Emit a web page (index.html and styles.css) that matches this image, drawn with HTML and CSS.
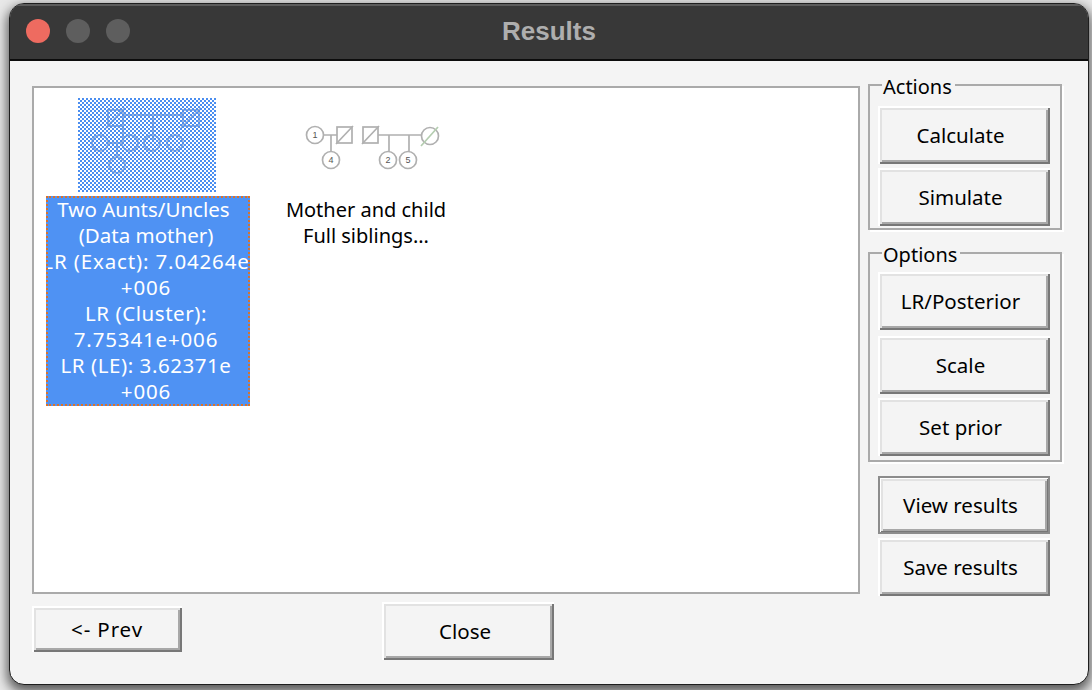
FILE: index.html
```html
<!DOCTYPE html>
<html lang="en">
<head>
<meta charset="utf-8">
<title>Results</title>
<link rel="stylesheet" href="styles.css">
</head>
<body>
<div class="window">
  <header class="titlebar">
    <div class="lights">
      <span class="light light-close"></span>
      <span class="light"></span>
      <span class="light"></span>
    </div>
    <div class="title">Results</div>
  </header>
  <main class="content">
    <div class="left">
      <div class="list">
        <div class="item">
          <svg class="thumb thumb-sel" width="138" height="94" viewBox="0 0 138 94">
            <defs>
              <pattern id="check" width="4" height="4" patternUnits="userSpaceOnUse" shape-rendering="crispEdges">
                <rect width="2" height="2" fill="#4b8ef0"/>
                <rect x="2" y="2" width="2" height="2" fill="#4b8ef0"/>
              </pattern>
            </defs>
            <g class="ped ped-sel" fill="none">
              <rect x="30" y="12" width="15" height="16"/>
              <path d="M28 30 47 10M45 17H105M75 17V44M45 17V44M105 12h16v16h-16zM103 30 123 10"/>
              <circle cx="22" cy="45" r="8"/>
              <circle cx="52" cy="45" r="8"/>
              <circle cx="74" cy="45" r="8"/>
              <circle cx="97" cy="45" r="8"/>
              <circle cx="39" cy="67" r="8"/>
              <path d="M30 45H44M39 45V59"/>
            </g>
            <rect width="138" height="94" fill="url(#check)"/>
          </svg>
          <div class="label label-sel">
            <div class="label-text"><span class="line-first">Two Aunts/Uncles</span><br>(Data mother)<br><span class="wide">LR (Exact): 7.04264e</span><br><span class="wide">+006</span><br><span class="mid">LR (Cluster):</span><br><span class="wide">7.75341e+006</span><br><span class="mid">LR (LE): 3.62371e</span><br><span class="wide">+006</span></div>
          </div>
        </div>
        <div class="item">
          <svg class="thumb" width="138" height="94" viewBox="0 0 138 94">
            <g class="ped" fill="none">
              <circle cx="18" cy="37" r="8.5"/>
              <rect x="40" y="29" width="15" height="16"/>
              <path d="M39 46 56 28"/>
              <path d="M26 37H40M34 37V54"/>
              <circle cx="34" cy="62" r="8.5"/>
              <rect x="66" y="29" width="15" height="16"/>
              <path d="M65 46 82 28"/>
              <path d="M81 37H124M92 37V54M112 37V54"/>
              <circle cx="91" cy="62" r="8.5"/>
              <circle cx="111" cy="62" r="8.5"/>
              <circle cx="133" cy="38" r="8.5"/>
              <path class="ped-green" d="M124 48 141 29"/>
            </g>
            <g class="ped-num">
              <text x="18" y="40">1</text>
              <text x="34" y="65">4</text>
              <text x="91" y="65">2</text>
              <text x="111" y="65">5</text>
            </g>
          </svg>
          <div class="label">Mother and child<br>Full siblings...</div>
        </div>
      </div>
      <div class="bottom">
        <button class="btn btn-prev" type="button">&lt;- Prev</button>
        <button class="btn btn-close" type="button">Close</button>
      </div>
    </div>
    <aside class="side">
      <section class="group group-actions">
        <span class="legend">Actions</span>
        <button class="btn" type="button">Calculate</button>
        <button class="btn" type="button">Simulate</button>
      </section>
      <section class="group group-options">
        <span class="legend">Options</span>
        <button class="btn" type="button">LR/Posterior</button>
        <button class="btn btn-scale" type="button">Scale</button>
        <button class="btn" type="button">Set prior</button>
      </section>
      <div class="loose">
        <button class="btn btn-default" type="button">View results</button>
        <button class="btn" type="button">Save results</button>
      </div>
    </aside>
  </main>
</div>
</body>
</html>
```

FILE: styles.css
```css
* { box-sizing: border-box; }
html, body { height: 100%; }
body {
  margin: 0;
  padding: 3px 3px 5px 9px;
  background: #e8e8e8;
  overflow: hidden;
  font-family: "Noto Sans", sans-serif;
  color: #000;
}
.window {
  height: 682px;
  display: flex;
  flex-direction: column;
  border: 1px solid #1e1e1e;
  border-radius: 15px;
  background: #f4f4f4;
  box-shadow: 0 5px 12px 2px rgba(0, 0, 0, 0.62);
  overflow: hidden;
}
.titlebar {
  flex: none;
  height: 57px;
  display: flex;
  align-items: center;
  justify-content: center;
  position: relative;
  background: #383838;
  border-top: 2px solid #5c5c5c;
  border-bottom: 2px solid #0c0c0c;
}
.lights {
  position: absolute;
  left: 16px;
  top: 13px;
  display: flex;
  gap: 16px;
}
.light {
  width: 24px;
  height: 24px;
  border-radius: 50%;
  background: #5e5e5e;
}
.light-close { background: #ee6b60; }
.title {
  font-family: "Liberation Sans", sans-serif;
  font-weight: 700;
  font-size: 26px;
  line-height: 30px;
  margin-bottom: 4px;
  color: #aeaeae;
}
.content {
  flex: 1;
  display: flex;
  gap: 8px;
  padding: 23px 26px 0 22px;
}
.left { width: 828px; flex: none; }
.list {
  margin-top: 2px;
  height: 508px;
  display: flex;
  gap: 12px;
  align-items: flex-start;
  padding: 10px 10px;
  background: #fff;
  border: 2px solid #aaa;
}
.item {
  width: 204px;
  display: flex;
  flex-direction: column;
  align-items: center;
  flex: none;
  margin-left: 2px;
}
.thumb { display: block; overflow: visible; flex: none; }
.thumb-sel { margin-right: 2px; }
.ped { stroke: #b0b0b0; stroke-width: 1.7; }
.ped-sel { stroke: #9fb5d8; stroke-width: 2; }
.ped-green { stroke: #b4cdb0; }
.ped-num {
  font-family: "Liberation Sans", sans-serif;
  font-size: 9px;
  text-anchor: middle;
  fill: #555;
}
.label {
  width: 204px;
  margin-top: 4px;
  padding: 1px 0;
  font-size: 20px;
  line-height: 26px;
  text-align: center;
  white-space: nowrap;
}
.label-sel {
  position: relative;
  background: #4f92f3;
  color: #fff;
  border: 2px dotted #dc7228;
  padding: 0;
  overflow: hidden;
  height: 210px;
  font-size: 20.5px;
}
.label-sel::before,
.label-sel::after {
  content: "";
  position: absolute;
  width: 2px;
  background: repeating-linear-gradient(#000 0 2px, #fff 2px 3px);
}
.label-sel::before { left: -2px; top: 58px; height: 15px; }
.label-sel::after { right: -2px; top: 62px; height: 9px; }
.label-text { margin: -2px -26px 0 -30px; }
.line-first { margin-right: 5px; }
.wide { letter-spacing: 0.85px; }
.mid { letter-spacing: 0.55px; }
.bottom {
  display: flex;
  align-items: flex-start;
  margin-top: 8px;
}
.btn {
  display: block;
  width: 172px;
  height: 58px;
  padding: 0 7px 0 0;
  border: 0;
  border-radius: 0;
  background: #f4f4f4;
  color: #000;
  font-family: "Noto Sans", sans-serif;
  font-size: 20.5px;
  box-shadow:
    inset 2px 2px 0 #fff,
    inset -2px -2px 0 #777,
    inset 4px 4px 0 #e2e2e2,
    inset -4px -4px 0 #a8a8a8;
}
.btn-prev { width: 150px; height: 46px; margin-top: 4px; letter-spacing: 0.9px; padding-right: 0; }
.btn-close { margin-left: 200px; padding-right: 6px; }
.side { width: 194px; flex: none; }
.group {
  position: relative;
  border: 2px solid #aaa;
  box-shadow: 2px 2px 0 #fff;
  padding: 20px 10px 2px 8px;
}
.group .btn + .btn { margin-top: 4px; }
.group-options { margin-top: 22px; padding-top: 18px; padding-bottom: 4px; }
.group .btn + .btn-scale { margin-top: 6px; }
.legend {
  position: absolute;
  left: 12px;
  top: -12px;
  padding: 0 3px 0 1px;
  background: #f4f4f4;
  font-size: 20px;
  line-height: 26px;
}
.loose { margin: 14px 0 0 10px; }
.loose .btn + .btn { margin-top: 4px; }
.btn-default {
  box-shadow:
    inset 0 0 0 2px #8c8c8c,
    inset 3px 3px 0 #fff,
    inset -3px -3px 0 #777,
    inset 5px 5px 0 #e2e2e2,
    inset -5px -5px 0 #a8a8a8;
}
```
